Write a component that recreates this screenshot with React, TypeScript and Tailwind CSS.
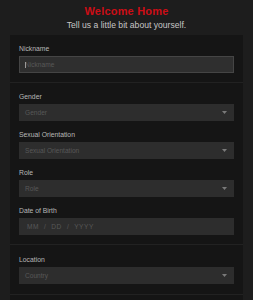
import type { ReactNode } from "react";

const font = { fontFamily: '"Liberation Sans", Arial, sans-serif' };

function Label({ children }: { children: ReactNode }) {
  return <label className="block text-[6.8px] leading-[11px] mb-[2px] text-[#b8b8b8] font-medium">{children}</label>;
}

function Select({ placeholder }: { placeholder: string }) {
  return (
    <div className="relative h-[17px] bg-[#2d2d2d] flex items-center pl-[6px]">
      <span className="text-[6.6px] text-[#585858]">{placeholder}</span>
      <svg className="absolute right-[7px] top-[7px]" width="5" height="3" viewBox="0 0 5 3">
        <path d="M0 0 L5 0 L2.5 3 Z" fill="#7a7a7a" />
      </svg>
    </div>
  );
}

function Field({ label, children }: { label: string; children: ReactNode }) {
  return (
    <div>
      <Label>{label}</Label>
      {children}
    </div>
  );
}

export default function App() {
  return (
    <div className="min-h-[300px] w-[253px] bg-[#1d1d1d] overflow-hidden" style={font}>
      <div className="text-center pt-[4px]">
        <h1 className="text-[11px] leading-[14px] font-bold text-[#cc0d16] tracking-[0.2px]">Welcome Home</h1>
        <p className="text-[8.6px] leading-[12px] text-[#c6c6c6] mt-[1px]">Tell us a little bit about yourself.</p>
      </div>

      <div className="mx-[10px] mt-[4px] bg-[#151515]">
        <div className="px-[9px] pt-[8px] pb-[9px] border-b border-[#222222]">
          <Field label="Nickname">
            <div className="relative h-[17px] bg-[#2f2f2f] border border-[#454545] flex items-center pl-[5px]">
              <span className="absolute left-[5px] top-[5px] w-px h-[6px] bg-[#9a9a9a]" />
              <input
                className="w-full bg-transparent outline-none text-[6.6px] text-[#ddd] placeholder:text-[#585858]"
                placeholder="Nickname"
              />
            </div>
          </Field>
        </div>

        <div className="px-[9px] pt-[8px] pb-[9px] border-b border-[#222222] flex flex-col gap-[8px]">
          <Field label="Gender">
            <Select placeholder="Gender" />
          </Field>
          <Field label="Sexual Orientation">
            <Select placeholder="Sexual Orientation" />
          </Field>
          <Field label="Role">
            <Select placeholder="Role" />
          </Field>
          <Field label="Date of Birth">
            <div className="h-[17px] bg-[#2d2d2d] flex items-center pl-[8px] text-[6.6px] text-[#585858] tracking-[0.5px]">
              <span>MM</span>
              <span className="mx-[5px]">/</span>
              <span>DD</span>
              <span className="mx-[5px]">/</span>
              <span>YYYY</span>
            </div>
          </Field>
        </div>

        <div className="px-[9px] pt-[9px] pb-[10px] border-b border-[#222222]">
          <Field label="Location">
            <Select placeholder="Country" />
          </Field>
        </div>
        <div className="h-[10px]" />
      </div>
    </div>
  );
}
